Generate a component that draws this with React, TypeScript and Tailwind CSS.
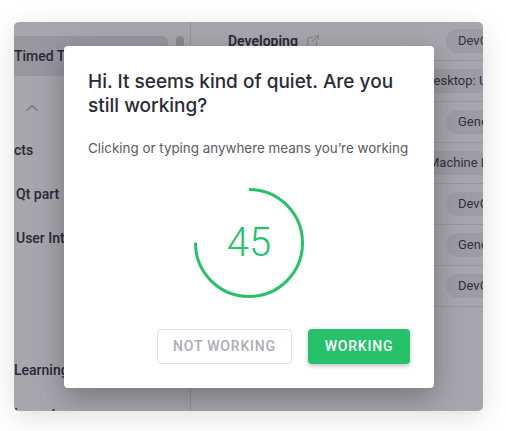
import { ChevronUp, ExternalLink } from 'lucide-react'

const rows = [
  { tag: 'DevOps', tagLeft: 255 },
  { tag: 'Desktop: UI', tagLeft: 222 },
  { tag: 'General', tagLeft: 255 },
  { tag: 'Machine Learning', tagLeft: 225 },
  { tag: 'DevOps', tagLeft: 255 },
  { tag: 'General', tagLeft: 255 },
  { tag: 'DevOps', tagLeft: 255 },
]

function Sidebar() {
  return (
    <aside className="relative w-[177px] shrink-0 border-r border-[#e2e2e8] pt-[14px] text-[14px] leading-5 text-[#2e2e3c]">
      {/* selected item */}
      <div className="h-10 w-[154px] rounded-r-md bg-[#e6e6eb] flex items-center font-medium whitespace-nowrap overflow-hidden">
        Timed Tasks
      </div>
      <div className="absolute left-[162px] top-[14px] w-2 h-[70px] rounded-full bg-[#cfcfd6]" />

      {/* section toggle */}
      <div className="h-[52px] pl-2 pt-[22px]">
        <ChevronUp className="w-5 h-5 text-[#a9a9b4]" strokeWidth={1.6} />
      </div>

      <div className="h-11 flex items-center font-medium whitespace-nowrap">cts</div>
      <div className="h-11 flex items-center font-medium whitespace-nowrap pl-0.5">Qt part</div>
      <div className="h-11 flex items-center font-medium whitespace-nowrap pl-0.5">User Interface</div>
      <div className="h-[88px]" />
      <div className="h-11 flex items-center font-medium whitespace-nowrap">Learning</div>
      <div className="h-11 flex items-center font-medium whitespace-nowrap">Import</div>
    </aside>
  )
}

function TaskList() {
  return (
    <div className="flex-1 min-w-0">
      {rows.map((row, i) => (
        <div
          key={i}
          className={`relative flex items-center border-b border-[#e4e4ea] ${i === 0 ? 'h-[39px]' : 'h-[41px]'}`}
        >
          {i === 0 && (
            <div className="absolute left-[37px] flex items-center gap-2 text-[14px] font-semibold text-[#2e2e3c]">
              Developing
              <ExternalLink className="w-[14px] h-[14px] text-[#b4b4be]" strokeWidth={1.5} />
            </div>
          )}
          <div
            className="absolute h-6 px-3 rounded-full bg-[#efeff2] flex items-center text-[13px] text-[#3a3a48] whitespace-nowrap"
            style={{ left: row.tagLeft }}
          >
            {row.tag}
          </div>
        </div>
      ))}
    </div>
  )
}

function Countdown({ seconds, total }: { seconds: number; total: number }) {
  const r = 53.5
  const c = 2 * Math.PI * r
  const part = (seconds / total) * c
  return (
    <div className="relative w-[110px] h-[110px] mx-auto">
      <svg width="110" height="110" viewBox="0 0 110 110" className="-rotate-90">
        <circle
          cx="55"
          cy="55"
          r={r}
          fill="none"
          stroke="#25c26b"
          strokeWidth="3"
          strokeDasharray={`${part} ${c}`}
        />
      </svg>
      <div className="absolute inset-0 flex items-center justify-center text-[40px] font-light text-[#25c26b] leading-none">
        {seconds}
      </div>
    </div>
  )
}

export default function App() {
  return (
    <div className="w-[506px] h-[431px] bg-white pt-[22px] pl-[14px] font-['Roboto',sans-serif]">
      <div className="relative w-[469px] h-[389px] rounded-[5px] overflow-hidden bg-white flex shadow-[0_6px_28px_rgba(0,0,0,0.13)]">
        <Sidebar />
        <TaskList />

        {/* dim overlay */}
        <div className="absolute inset-0 bg-[rgb(35,33,48)]/40" />

        {/* idle dialog */}
        <div className="absolute left-[50px] top-[24px] w-[370px] h-[342px] bg-white rounded-[4px] px-6 pt-6 pb-6 shadow-[0_10px_30px_rgba(0,0,0,0.3)]">
          <h2 className="font-['Inter',sans-serif] text-[19px] leading-6 font-medium text-[#2a2a38]">
            Hi. It seems kind of quiet. Are you still working?
          </h2>
          <p className="mt-5 font-['Inter',sans-serif] text-[13.4px] leading-5 text-[#5a5a66] whitespace-nowrap">
            Clicking or typing anywhere means you’re working
          </p>
          <div className="mt-[30px]">
            <Countdown seconds={45} total={60} />
          </div>
          <div className="mt-[31px] flex justify-end gap-4">
            <button className="h-[35px] w-[135px] rounded-[4px] border border-[#e2e2e8] bg-white text-[14px] font-medium tracking-[0.8px] text-[#acacb5]">
              NOT WORKING
            </button>
            <button className="h-[35px] w-[102px] rounded-[4px] bg-[#25c26b] text-[14px] font-medium tracking-[0.8px] text-white shadow-[0_2px_4px_rgba(0,0,0,0.25)]">
              WORKING
            </button>
          </div>
        </div>
      </div>
    </div>
  )
}
